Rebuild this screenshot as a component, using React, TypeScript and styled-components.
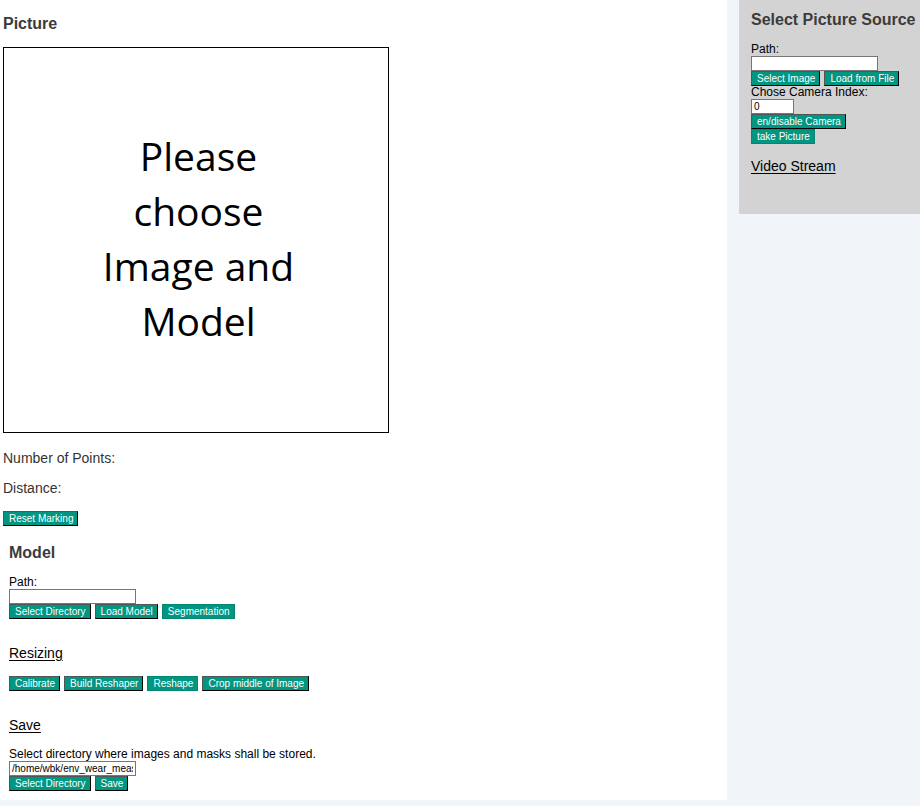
import React from "react";
import styled, { createGlobalStyle } from "styled-components";

const GlobalStyle = createGlobalStyle`
  *, *::before, *::after { box-sizing: border-box; }
  body {
    margin: 0;
    background: #f1f5fa;
    color: #000;
    font-family: "Liberation Sans", Arial, sans-serif;
    font-size: 12px;
    line-height: 13px;
  }
`;

const Page = styled.div`
  display: grid;
  grid-template-columns: minmax(0, 727fr) minmax(181px, 181fr);
  column-gap: 12px;
  align-items: start;
`;

const Main = styled.main`
  background: #fff;
  padding: 14px 3px 9px;
`;

const Sidebar = styled.aside`
  background: #d3d3d3;
  padding: 10px 0 25px 12px;
`;

const Section = styled.section`
  padding: 17px 6px 0;
`;

const Title = styled.h3`
  margin: 0 0 13px;
  color: #3b3b3b;
  font-size: 16px;
  line-height: 20px;
  white-space: nowrap;
`;

const SubTitle = styled.h4<{ $spaced?: boolean }>`
  margin: ${(p) => (p.$spaced ? "25px" : "13px")} 0 14px;
  font-size: 14px;
  font-weight: 400;
  line-height: 18px;
  text-decoration: underline;
  text-underline-offset: 2px;
`;

const Preview = styled.figure`
  display: flex;
  align-items: center;
  justify-content: center;
  width: 386px;
  max-width: 100%;
  aspect-ratio: 1;
  margin: 0 0 17px;
  padding: 0 0 5px 5px;
  border: 1px solid #000;
`;

const PreviewText = styled.p`
  width: 220px;
  margin: 0;
  font-family: "Open Sans", "Noto Sans", sans-serif;
  font-size: 39px;
  line-height: 55px;
  text-align: center;
`;

const Readings = styled.div`
  display: flex;
  flex-direction: column;
  gap: 14px;
  margin-bottom: 15px;
`;

const Reading = styled.p`
  margin: 0;
  color: #333;
  font-size: 14px;
  line-height: 16px;
`;

const Caption = styled.label`
  display: block;
`;

const TextBox = styled.input<{ $short?: boolean }>`
  display: block;
  width: ${(p) => (p.$short ? "43px" : "127px")};
  height: 15px;
  padding: 0 2px;
  border: 1px solid #767676;
  border-radius: 0;
  background: #fff;
  color: #000;
  font-family: inherit;
  font-size: 10px;
  outline: 0;
`;

const ButtonRow = styled.div`
  display: flex;
  flex-wrap: wrap;
  gap: 0 4px;
`;

const Button = styled.button<{ $flat?: boolean }>`
  height: 15px;
  padding: 0 4px 0 5px;
  border: 1px ${(p) => (p.$flat ? "solid #078573" : "outset #000")};
  border-radius: 0;
  background: #009682;
  color: #fff;
  font-family: inherit;
  font-size: 10px;
  line-height: 13px;
  white-space: nowrap;
`;

export default function App() {
  return (
    <>
      <GlobalStyle />
      <Page>
        <Main>
          <Title>Picture</Title>
          <Preview>
            <PreviewText>Please choose Image and Model</PreviewText>
          </Preview>
          <Readings>
            <Reading>Number of Points:</Reading>
            <Reading>Distance:</Reading>
          </Readings>
          <ButtonRow>
            <Button type="button">Reset Marking</Button>
          </ButtonRow>

          <Section>
            <Title>Model</Title>
            <Caption htmlFor="model-path">Path:</Caption>
            <TextBox id="model-path" type="text" />
            <ButtonRow>
              <Button type="button">Select Directory</Button>
              <Button type="button">Load Model</Button>
              <Button type="button" $flat>Segmentation</Button>
            </ButtonRow>

            <SubTitle $spaced>Resizing</SubTitle>
            <ButtonRow>
              <Button type="button">Calibrate</Button>
              <Button type="button">Build Reshaper</Button>
              <Button type="button" $flat>Reshape</Button>
              <Button type="button">Crop middle of Image</Button>
            </ButtonRow>

            <SubTitle $spaced>Save</SubTitle>
            <Caption htmlFor="save-path">
              Select directory where images and masks shall be stored.
            </Caption>
            <TextBox id="save-path" type="text" defaultValue="/home/wbk/env_wear_measurement" />
            <ButtonRow>
              <Button type="button">Select Directory</Button>
              <Button type="button">Save</Button>
            </ButtonRow>
          </Section>
        </Main>

        <Sidebar>
          <Title>Select Picture Source</Title>
          <Caption htmlFor="image-path">Path:</Caption>
          <TextBox id="image-path" type="text" />
          <ButtonRow>
            <Button type="button">Select Image</Button>
            <Button type="button">Load from File</Button>
          </ButtonRow>
          <Caption htmlFor="camera-index">Chose Camera Index:</Caption>
          <TextBox id="camera-index" type="text" inputMode="numeric" defaultValue="0" $short />
          <ButtonRow>
            <Button type="button">en/disable Camera</Button>
          </ButtonRow>
          <ButtonRow>
            <Button type="button" $flat>take Picture</Button>
          </ButtonRow>
          <SubTitle>Video Stream</SubTitle>
        </Sidebar>
      </Page>
    </>
  );
}
